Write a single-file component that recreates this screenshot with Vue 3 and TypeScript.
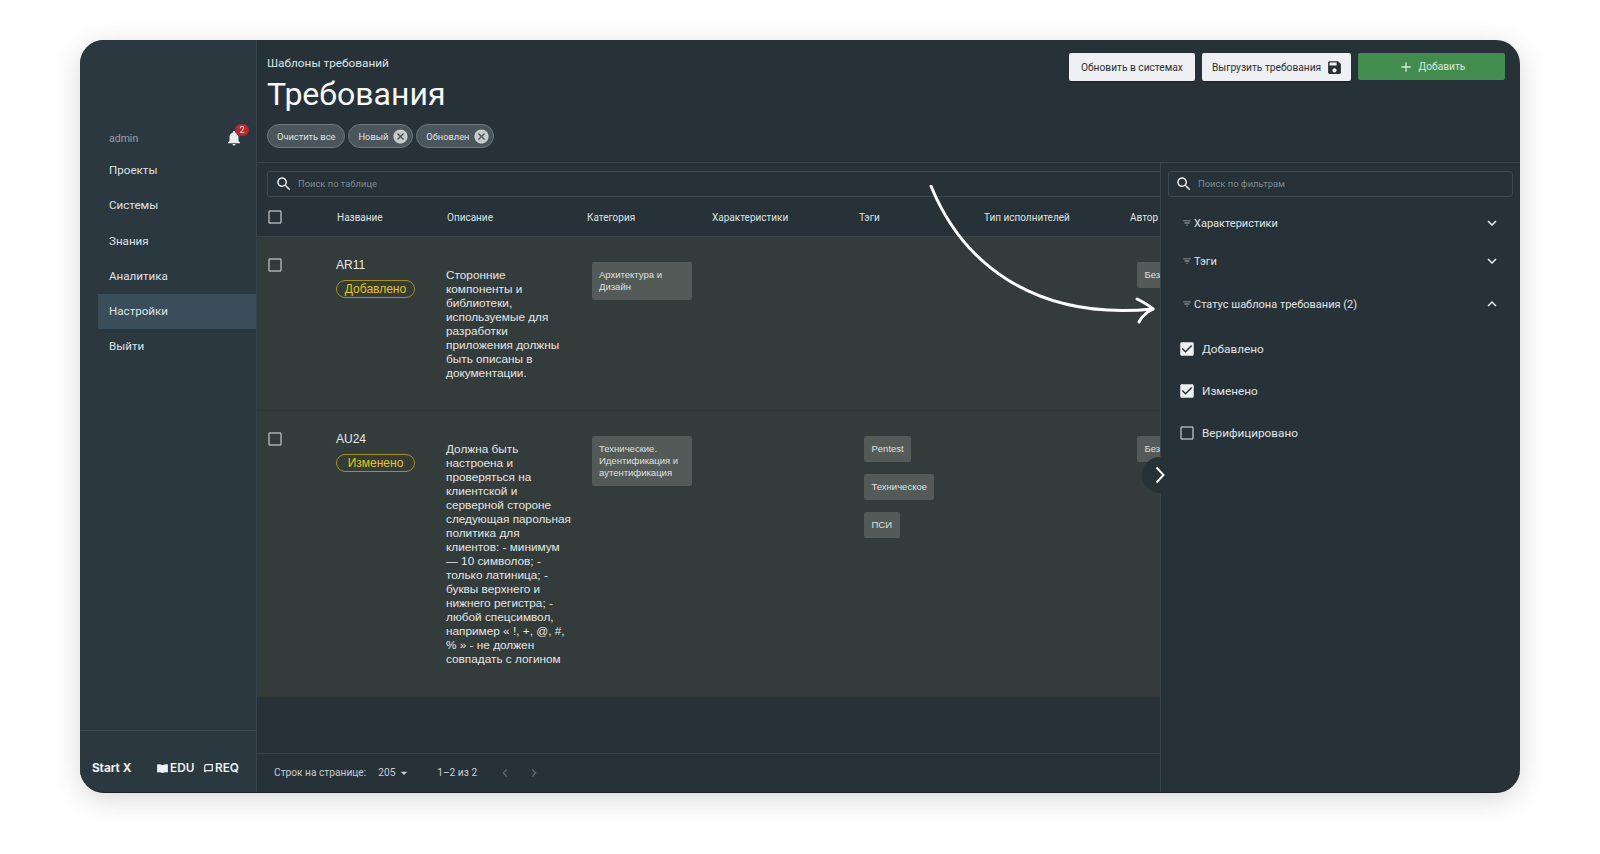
<script setup lang="ts">
const I = {
  search: 'M15.5 14h-.79l-.28-.27C15.41 12.59 16 11.11 16 9.5 16 5.91 13.09 3 9.5 3S3 5.91 3 9.5 5.91 16 9.5 16c1.61 0 3.09-.59 4.23-1.57l.27.28v.79l5 4.99L20.49 19l-4.99-5zm-6 0C7.01 14 5 11.99 5 9.5S7.01 5 9.5 5 14 7.01 14 9.5 11.99 14 9.5 14z',
  bell: 'M12 22c1.1 0 2-.9 2-2h-4c0 1.1.89 2 2 2zm6-6v-5c0-3.07-1.64-5.64-4.5-6.32V4c0-.83-.67-1.5-1.5-1.5s-1.5.67-1.5 1.5v.68C7.63 5.36 6 7.92 6 11v5l-2 2v1h16v-1l-2-2z',
  save: 'M17 3H5c-1.11 0-2 .9-2 2v14c0 1.1.89 2 2 2h14c1.1 0 2-.9 2-2V7l-4-4zm-5 16c-1.66 0-3-1.34-3-3s1.34-3 3-3 3 1.34 3 3-1.34 3-3 3zm3-10H5V5h10v4z',
  add: 'M19 13h-6v6h-2v-6H5v-2h6V5h2v6h6v2z',
  cancel: 'M12 2C6.47 2 2 6.47 2 12s4.47 10 10 10 10-4.47 10-10S17.53 2 12 2zm5 13.59L15.59 17 12 13.41 8.41 17 7 15.59 10.59 12 7 8.41 8.41 7 12 10.59 15.59 7 17 8.41 13.41 12 17 15.59z',
  filter: 'M10 18h4v-2h-4v2zM3 6v2h18V6H3zm3 7h12v-2H6v2z',
  more: 'M16.59 8.59 12 13.17 7.41 8.59 6 10l6 6 6-6z',
  less: 'm12 8-6 6 1.41 1.41L12 10.83l4.59 4.58L18 14z',
  left: 'M15.41 7.41 14 6l-6 6 6 6 1.41-1.41L10.83 12z',
  right: 'M10 6 8.59 7.41 13.17 12l-4.58 4.59L10 18l6-6z',
  drop: 'm7 10 5 5 5-5z',
  box: 'M19 5v14H5V5h14m0-2H5c-1.1 0-2 .9-2 2v14c0 1.1.9 2 2 2h14c1.1 0 2-.9 2-2V5c0-1.1-.9-2-2-2z',
  checked: 'M19 3H5c-1.11 0-2 .9-2 2v14c0 1.1.89 2 2 2h14c1.11 0 2-.89 2-2V5c0-1.1-.89-2-2-2zm-9 14l-5-5 1.41-1.41L10 14.17l7.59-7.59L19 8l-9 9z'
}

interface Row {
  code: string
  status: string
  desc: string
  category: string
  tags: string[]
}

const nav = ['Проекты', 'Системы', 'Знания', 'Аналитика', 'Настройки', 'Выйти']
const columns = ['Название', 'Описание', 'Категория', 'Характеристики', 'Тэги', 'Тип исполнителей', 'Автор']
const rows: Row[] = [
  {
    code: 'AR11',
    status: 'Добавлено',
    desc: 'Сторонние компоненты и библиотеки, используемые для разработки приложения должны быть описаны в документации.',
    category: 'Архитектура и Дизайн',
    tags: []
  },
  {
    code: 'AU24',
    status: 'Изменено',
    desc: 'Должна быть настроена и проверяться на клиентской и серверной стороне следующая парольная политика для клиентов: - минимум — 10 символов; - только латиница; - буквы верхнего и нижнего регистра; - любой спецсимвол, например « !, +, @, #, % » - не должен совпадать с логином',
    category: 'Технические. Идентификация и аутентификация',
    tags: ['Pentest', 'Техническое', 'ПСИ']
  }
]
const filters = [
  { name: 'Характеристики', open: false },
  { name: 'Тэги', open: false },
  { name: 'Статус шаблона требования (2)', open: true }
]
const statuses = [
  { name: 'Добавлено', on: true },
  { name: 'Изменено', on: true },
  { name: 'Верифицировано', on: false }
]
</script>

<template>
  <div class="page">
    <div class="window">
      <aside class="sidebar">
        <div class="user">
          <span class="user-name">admin</span>
          <span class="bell">
            <svg viewBox="0 0 24 24" class="bell-icon"><path :d="I.bell" /></svg>
            <span class="badge">2</span>
          </span>
        </div>
        <nav class="nav">
          <a v-for="n in nav" :key="n" class="nav-item" :class="{ active: n === 'Настройки' }">{{ n }}</a>
        </nav>
        <div class="brands">
          <span class="brand start">Start<span class="x">X</span></span>
          <span class="brand edu">
            <svg viewBox="0 0 12 10" class="brand-icon"><path d="M0 .6C2 .2 4.4.4 6 1.4 7.6.4 10 .2 12 .6V9.4C10 9 7.6 9.2 6 10 4.4 9.2 2 9 0 9.4z" /></svg>EDU
          </span>
          <span class="brand req">
            <svg viewBox="0 0 10 10" class="brand-icon req-icon"><path d="M2.6.8h6.6v6.6H2.6C1.6 7.4 1 8 .8 9V2.6C.8 1.6 1.6.8 2.6.8z" fill="none" stroke="currentColor" stroke-width="1.4" /></svg>REQ
          </span>
        </div>
      </aside>

      <main class="main">
        <header class="header">
          <div class="heading">
            <div class="crumb">Шаблоны требований</div>
            <h1 class="title">Требования</h1>
            <div class="chips">
              <span class="chip">Очистить все</span>
              <span class="chip">Новый<svg viewBox="0 0 24 24" class="chip-x"><path :d="I.cancel" /></svg></span>
              <span class="chip">Обновлен<svg viewBox="0 0 24 24" class="chip-x"><path :d="I.cancel" /></svg></span>
            </div>
          </div>
          <div class="actions">
            <button class="btn light b1">Обновить в системах</button>
            <button class="btn light b2">Выгрузить требования<svg viewBox="0 0 24 24" class="btn-icon"><path :d="I.save" /></svg></button>
            <button class="btn green"><svg viewBox="0 0 24 24" class="btn-icon"><path :d="I.add" /></svg>Добавить</button>
          </div>
        </header>

        <div class="body">
          <section class="table-panel">
            <div class="search table-search">
              <svg viewBox="0 0 24 24" class="search-icon"><path :d="I.search" /></svg>
              <span>Поиск по таблице</span>
            </div>
            <div class="table">
              <div class="grid thead">
                <div class="cell-check"><svg viewBox="0 0 24 24" class="box"><path :d="I.box" /></svg></div>
                <div v-for="c in columns" :key="c" class="th">{{ c }}</div>
              </div>
              <div v-for="r in rows" :key="r.code" class="grid row">
                <div class="cell-check"><svg viewBox="0 0 24 24" class="box"><path :d="I.box" /></svg></div>
                <div class="cell-name">
                  <div class="code">{{ r.code }}</div>
                  <span class="pill">{{ r.status }}</span>
                </div>
                <div class="cell-desc">{{ r.desc }}</div>
                <div class="cell-cat"><span class="tag cat">{{ r.category }}</span></div>
                <div></div>
                <div class="cell-tags"><span v-for="t in r.tags" :key="t" class="tag">{{ t }}</span></div>
                <div></div>
                <div class="cell-author"><span class="tag author">Без автора</span></div>
              </div>
            </div>
            <footer class="pager">
              <span class="pager-label">Строк на странице:</span>
              <span class="pager-size">205<svg viewBox="0 0 24 24" class="drop"><path :d="I.drop" /></svg></span>
              <span class="pager-range">1–2 из 2</span>
              <svg viewBox="0 0 24 24" class="pager-arrow"><path :d="I.left" /></svg>
              <svg viewBox="0 0 24 24" class="pager-arrow"><path :d="I.right" /></svg>
            </footer>
          </section>

          <section class="filter-panel">
            <div class="search filter-search">
              <svg viewBox="0 0 24 24" class="search-icon"><path :d="I.search" /></svg>
              <span>Поиск по фильтрам</span>
            </div>
            <div v-for="f in filters" :key="f.name" class="filter-head" :class="{ open: f.open }">
              <svg viewBox="0 0 24 24" class="filter-icon"><path :d="I.filter" /></svg>
              <span class="filter-name">{{ f.name }}</span>
              <svg viewBox="0 0 24 24" class="filter-chevron"><path :d="f.open ? I.less : I.more" /></svg>
            </div>
            <div class="status-list">
              <label v-for="s in statuses" :key="s.name" class="status">
                <svg viewBox="0 0 24 24" class="box" :class="{ on: s.on }"><path :d="s.on ? I.checked : I.box" /></svg>
                {{ s.name }}
              </label>
            </div>
          </section>

          <button class="collapse">
            <svg viewBox="0 0 24 24"><path d="M8.5 4.5 15.5 12l-7 7.5" fill="none" stroke="#fff" stroke-width="1.9" /></svg>
          </button>
        </div>

        <svg class="arrow" viewBox="0 0 260 150" width="260" height="150">
          <path d="M10 1C40 75 110 136 232 124" fill="none" stroke="#fff" stroke-width="3" stroke-linecap="round" />
          <path d="M216 114C222 117 228 120 232 124C226 127 221 131 218 137" fill="none" stroke="#fff" stroke-width="3" stroke-linecap="round" stroke-linejoin="round" />
        </svg>
      </main>
    </div>
  </div>
</template>

<style>
html, body { margin: 0; background: #fff; }
</style>

<style scoped>
* { box-sizing: border-box; }
.page {
  width: 1600px;
  height: 854px;
  padding: 40px 80px 61px;
  background: #fff;
  font-family: Roboto, "Liberation Sans", sans-serif;
  overflow: hidden;
}
.window {
  display: flex;
  height: 753px;
  border-radius: 24px;
  border-bottom: 1px solid #1c2226;
  overflow: hidden;
  background: #263238;
  box-shadow: 0 6px 28px rgba(60, 60, 60, .2);
  color: #e4e6e7;
}
.sidebar {
  width: 177px;
  flex: none;
  display: flex;
  flex-direction: column;
  background: #2b3840;
  border-right: 1px solid #37444c;
  padding-top: 83px;
}
.user {
  display: flex;
  align-items: center;
  justify-content: space-between;
  height: 29px;
  margin-left: 29px;
  padding: 1px 13px 0 0;
}
.user-name { font-size: 10.5px; color: #99a1a6; }
.bell { position: relative; display: block; width: 18px; height: 18px; }
.bell-icon { width: 18px; height: 18px; fill: #e9ebec; display: block; }
.badge {
  position: absolute;
  top: -5px;
  left: 10px;
  width: 14px;
  height: 12px;
  border-radius: 6px;
  background: #b52a30;
  color: #f0d8d8;
  font-size: 9px;
  line-height: 12px;
  text-align: center;
}
.nav { display: flex; flex-direction: column; margin: 1px 0 0 18px; flex: 1; }
.nav-item {
  height: 35.25px;
  line-height: 35px;
  padding-left: 11px;
  font-size: 11.6px;
  color: #dfe2e3;
}
.nav-item.active { background: #3a4d5a; }
.brands {
  height: 62px;
  flex: none;
  border-top: 1px solid #3c4951;
  display: flex;
  align-items: center;
  padding: 13px 0 0 12px;
  color: #eef0f1;
  font-family: Inter, sans-serif;
  font-weight: 600;
  font-size: 11.8px;
}
.brand { display: inline-flex; align-items: center; }
.start { width: 65px; letter-spacing: -.1px; font-weight: 700; }
.x { margin-left: 3px; }
.edu { width: 47px; }
.brand-icon { width: 11px; height: 9px; fill: currentColor; margin-right: 2px; }
.req-icon { width: 9px; height: 9px; fill: none; }
.main { flex: 1; min-width: 0; display: flex; flex-direction: column; position: relative; }
.header {
  height: 123px;
  flex: none;
  display: flex;
  justify-content: space-between;
  padding: 13px 15px 0 10px;
  border-bottom: 1px solid #37444b;
}
.heading { padding-top: 2px; }
.crumb { font-size: 11.8px; line-height: 16px; color: #dfe2e3; }
.title {
  margin: 3px 0 0;
  font-size: 32px;
  font-weight: 400;
  line-height: 40px;
  color: #f6f7f7;
}
.chips { display: flex; gap: 3px; margin-top: 10px; }
.chip {
  height: 24px;
  display: inline-flex;
  align-items: center;
  gap: 4px;
  padding: 0 3px 0 9px;
  border: 1px solid #6d777d;
  border-radius: 12px;
  background: #4b565c;
  font-size: 9.3px;
  color: #dfe2e3;
}
.chip:first-child { padding-right: 9px; }
.chip-x { width: 17px; height: 17px; fill: #c8cbcd; }
.actions { display: flex; gap: 7px; align-items: flex-start; }
.btn {
  height: 28px;
  display: inline-flex;
  align-items: center;
  justify-content: center;
  border: 0;
  border-radius: 2px;
  font-family: inherit;
  font-size: 10.2px;
  padding: 0;
}
.light { background: #eef0f3; color: #2a2f33; box-shadow: 0 1px 1px rgba(0,0,0,.4); }
.b1 { width: 126px; }
.b2 { width: 149px; gap: 5px; padding-left: 2px; }
.green { width: 147px; height: 27px; background: #438c50; color: #dbe9dd; gap: 5px; }
.btn-icon { width: 17px; height: 17px; fill: currentColor; }
.green .btn-icon { width: 16px; height: 16px; }
.body { flex: 1; min-height: 0; display: flex; position: relative; }
.table-panel {
  width: 904px;
  flex: none;
  display: flex;
  flex-direction: column;
  overflow: hidden;
  border-right: 1px solid #37444b;
  position: relative;
}
.search {
  display: flex;
  align-items: center;
  border: 1px solid #3c4a52;
  border-radius: 3px;
  font-size: 9.4px;
  color: #81898e;
  padding-bottom: 1px;
}
.search-icon { width: 18px; height: 18px; fill: #e4e6e7; margin-right: 5px; }
.table-search { height: 26px; margin: 8px -10px 0 10px; padding-left: 7px; border-right: 0; }
.table { flex: 1; min-height: 0; overflow: hidden; }
.grid {
  display: grid;
  grid-template-columns: 80px 110px 140px 125px 147px 125px 146px 100px;
  width: 973px;
}
.thead {
  height: 40px;
  padding-top: 1px;
  align-items: center;
  border-bottom: 1px solid #39454c;
}
.th { font-size: 10px; color: #dfe2e3; white-space: nowrap; }
.cell-check { padding-left: 9px; display: flex; }
.box { width: 18px; height: 18px; fill: #a9adaf; display: block; flex: none; }
.box.on { fill: #eef0f2; }
.row {
  background: #333b3b;
  border-bottom: 1px solid #2f3736;
  align-items: start;
}
.row .cell-check { padding-top: 19px; }
.cell-name { padding-top: 21px; margin-left: -1px; }
.code { font-size: 12px; line-height: 14px; color: #e8e9e9; font-family: "Liberation Sans", sans-serif; }
.pill {
  display: block;
  width: 79px;
  height: 18px;
  margin-top: 8px;
  border: 1px solid #a88f1c;
  border-radius: 9px;
  color: #e6c516;
  font-size: 12px;
  line-height: 16px;
  text-align: center;
  font-family: "Liberation Sans", sans-serif;
}
.cell-desc {
  padding: 31px 0 30px;
  margin-left: -1px;
  width: 127px;
  font-family: "Liberation Sans", sans-serif;
  font-size: 11.8px;
  line-height: 14px;
  color: #e4e6e6;
}
.tag {
  display: block;
  background: #545a58;
  border-radius: 2px;
  color: #dfe1e0;
  font-size: 9.5px;
  line-height: 12px;
  padding: 7px 7.5px;
  font-family: "Liberation Sans", sans-serif;
}
.cell-cat { padding: 25px 0 0 5px; }
.cat { width: 100px; padding: 7px; }
.cell-tags {
  padding: 25px 0 0 5px;
  display: flex;
  flex-direction: column;
  align-items: flex-start;
  gap: 12px;
}
.cell-author { padding: 25px 0 0 7px; }
.author { white-space: nowrap; }
.pager {
  height: 39px;
  flex: none;
  display: flex;
  align-items: center;
  padding: 0 0 1px 17px;
  border-top: 1px solid #37444b;
  font-size: 10.2px;
  color: #c9cdcf;
}
.pager-size { display: inline-flex; align-items: center; margin-left: 12px; width: 59px; }
.drop { width: 16px; height: 16px; fill: #c9cdcf; margin-left: 1px; }
.pager-arrow { width: 16px; height: 16px; fill: #5f696f; margin-right: 13px; }
.pager-range { width: 60px; }
.filter-panel {
  flex: 1;
  min-width: 0;
  padding: 8px 7px 0 7px;
}
.filter-search { height: 26px; padding-left: 6px; }
.filter-head {
  display: flex;
  align-items: center;
  height: 16px;
  margin: 18px 0 0 14px;
  padding-right: 12px;
  font-size: 11px;
  color: #e0e3e4;
}
.filter-search + .filter-head { margin-top: 18px; }
.filter-head + .filter-head { margin-top: 22px; }
.filter-head.open { margin-top: 27px; }
.filter-icon { width: 10px; height: 10px; fill: #a9adaf; margin-right: 2px; }
.filter-name { flex: 1; }
.filter-chevron { width: 18px; height: 18px; fill: #eef0f2; flex: none; }
.status-list { display: flex; flex-direction: column; gap: 24px; margin: 28px 0 0 10px; }
.status { display: flex; align-items: center; height: 18px; gap: 6px; font-size: 11.75px; color: #e0e3e4; font-family: Roboto, sans-serif; }
.collapse {
  position: absolute;
  left: 885px;
  top: 294px;
  width: 36px;
  height: 36px;
  border: 0;
  border-radius: 50%;
  background: #263238;
  padding: 6px;
}
.collapse svg { display: block; width: 24px; height: 24px; }
.arrow { position: absolute; left: 664px; top: 145px; pointer-events: none; }
</style>
